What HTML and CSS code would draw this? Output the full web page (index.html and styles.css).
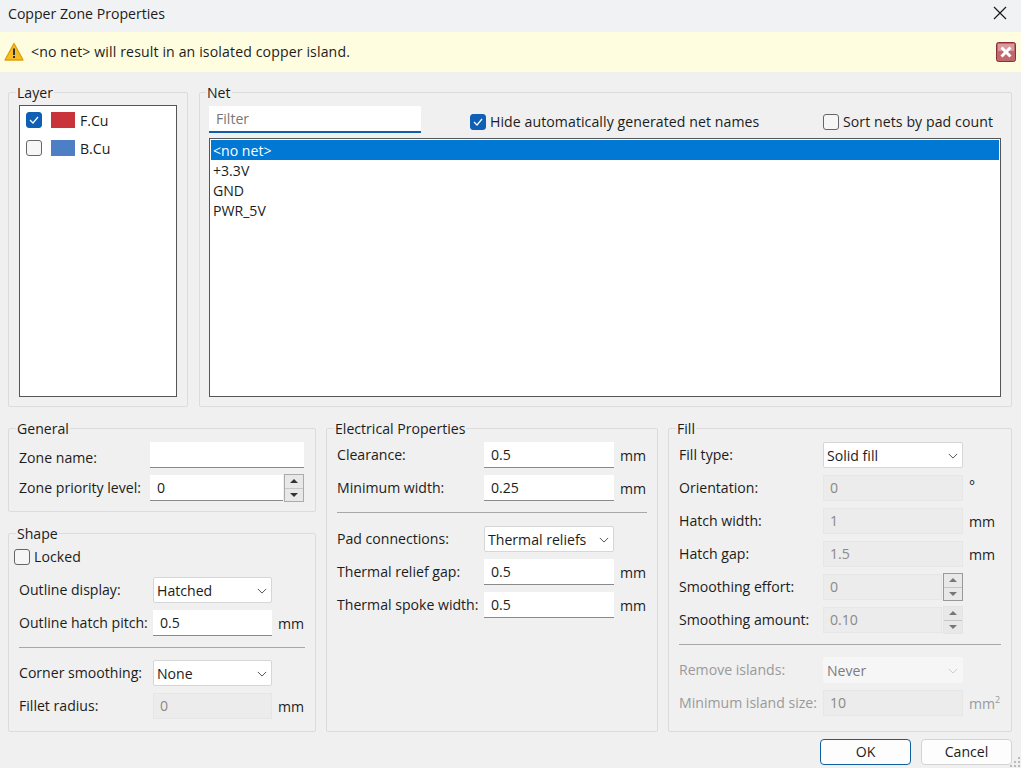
FILE: index.html
```html
<!DOCTYPE html>
<html lang="en">
<head>
<meta charset="utf-8">
<title>Copper Zone Properties</title>
<link rel="stylesheet" href="styles.css">
</head>
<body>
<div class="dialog">
  <header class="titlebar">
    <span>Copper Zone Properties</span>
    <svg class="close" width="14" height="14" viewBox="0 0 14 14"><path d="M1 1L13 13M13 1L1 13" stroke="#1a1a1a" stroke-width="1.2" fill="none"/></svg>
  </header>
  <div class="infobar">
    <svg class="warn" width="20" height="20" viewBox="0 0 20 20"><path d="M10 1.5L19 18H1Z" fill="#f7bd24" stroke="#e0a010" stroke-width="1.4" stroke-linejoin="round"/><rect x="9" y="6.5" width="2" height="6.5" fill="#333"/><rect x="9" y="14" width="2" height="2" fill="#333"/></svg>
    <span class="infotext">&lt;no net&gt; will result in an isolated copper island.</span>
    <svg class="infoclose" width="20" height="20" viewBox="0 0 20 20"><rect x="0.5" y="0.5" width="19" height="19" rx="2" fill="#c0686c" stroke="#8e2f35"/><rect x="2" y="2" width="16" height="7" fill="#d99a9c"/><path d="M5.5 5.5L14.5 14.5M14.5 5.5L5.5 14.5" stroke="#fff" stroke-width="3" fill="none"/></svg>
  </div>

  <main class="content">
    <section class="top">
      <fieldset class="group">
        <legend>Layer</legend>
        <div class="layerlist">
          <div class="layerrow">
            <span class="check on"><svg width="10" height="8" viewBox="0 0 10 8"><path d="M1 4L4 7L9 1" stroke="#fff" stroke-width="1.2" fill="none"/></svg></span>
            <span class="swatch red"></span><span class="layername">F.Cu</span>
          </div>
          <div class="layerrow">
            <span class="check"></span>
            <span class="swatch blue"></span><span class="layername">B.Cu</span>
          </div>
        </div>
      </fieldset>
      <fieldset class="group netgroup">
        <legend>Net</legend>
        <div class="netbar">
          <div class="filter">Filter</div>
          <label class="checkrow hide"><span class="check on"><svg width="10" height="8" viewBox="0 0 10 8"><path d="M1 4L4 7L9 1" stroke="#fff" stroke-width="1.2" fill="none"/></svg></span>Hide automatically generated net names</label>
          <label class="checkrow sort"><span class="check"></span>Sort nets by pad count</label>
        </div>
        <div class="netlist">
          <div class="netrow selected">&lt;no net&gt;</div>
          <div class="netrow">+3.3V</div>
          <div class="netrow">GND</div>
          <div class="netrow">PWR_5V</div>
        </div>
      </fieldset>
    </section>

    <section class="bottom">
      <div class="leftcol">
        <fieldset class="group">
          <legend>General</legend>
          <div class="form general">
            <span class="lower">Zone name:</span><div class="input"></div>
            <span>Zone priority level:</span>
            <div class="spinwrap"><div class="input grow">0</div><div class="spin"><i class="up"></i><i class="down"></i></div></div>
          </div>
        </fieldset>
        <fieldset class="group growbox">
          <legend>Shape</legend>
          <label class="checkrow locked"><span class="check"></span>Locked</label>
          <div class="form shape">
            <span>Outline display:</span><div class="select">Hatched<svg class="chev" width="10" height="6" viewBox="0 0 12 7"><path d="M1 1L6 6L11 1" stroke="#555" stroke-width="1.2" fill="none"/></svg></div><span></span>
            <span>Outline hatch pitch:</span><div class="input">0.5</div><span class="unit">mm</span>
            <hr class="sep">
            <span>Corner smoothing:</span><div class="select">None<svg class="chev" width="10" height="6" viewBox="0 0 12 7"><path d="M1 1L6 6L11 1" stroke="#555" stroke-width="1.2" fill="none"/></svg></div><span></span>
            <span>Fillet radius:</span><div class="input off">0</div><span class="unit">mm</span>
          </div>
        </fieldset>
      </div>

      <fieldset class="group">
        <legend>Electrical Properties</legend>
        <div class="form electrical">
          <span>Clearance:</span><div class="input">0.5</div><span class="unit">mm</span>
          <span>Minimum width:</span><div class="input">0.25</div><span class="unit">mm</span>
          <hr class="sep">
          <span>Pad connections:</span><div class="select">Thermal reliefs<svg class="chev" width="10" height="6" viewBox="0 0 12 7"><path d="M1 1L6 6L11 1" stroke="#555" stroke-width="1.2" fill="none"/></svg></div><span></span>
          <span>Thermal relief gap:</span><div class="input">0.5</div><span class="unit">mm</span>
          <span>Thermal spoke width:</span><div class="input">0.5</div><span class="unit">mm</span>
        </div>
      </fieldset>

      <fieldset class="group">
        <legend>Fill</legend>
        <div class="form fill">
          <span>Fill type:</span><div class="select">Solid fill<svg class="chev" width="10" height="6" viewBox="0 0 12 7"><path d="M1 1L6 6L11 1" stroke="#555" stroke-width="1.2" fill="none"/></svg></div><span></span>
          <span>Orientation:</span><div class="input off">0</div><span class="unit deg">°</span>
          <span>Hatch width:</span><div class="input off">1</div><span class="unit">mm</span>
          <span>Hatch gap:</span><div class="input off">1.5</div><span class="unit">mm</span>
          <span>Smoothing effort:</span><div class="spinwrap"><div class="input off grow">0</div><div class="spin dark"><i class="up"></i><i class="down"></i></div></div><span></span>
          <span>Smoothing amount:</span><div class="spinwrap"><div class="input off grow">0.10</div><div class="spin faint"><i class="up"></i><i class="down"></i></div></div><span></span>
          <hr class="sep">
          <span class="dim">Remove islands:</span><div class="select disabled">Never<svg class="chev" width="10" height="6" viewBox="0 0 12 7"><path d="M1 1L6 6L11 1" stroke="#ccc" stroke-width="1.2" fill="none"/></svg></div><span></span>
          <span class="dim">Minimum island size:</span><div class="input off">10</div><span class="unit dim">mm<sup>2</sup></span>
        </div>
      </fieldset>
    </section>

    <footer class="buttons">
      <button class="btn primary">OK</button>
      <button class="btn">Cancel</button>
    </footer>
  </main>
  <svg class="grip" width="11" height="11" viewBox="0 0 11 11" fill="#bbb"><rect x="8" y="0" width="2" height="2"/><rect x="4" y="4" width="2" height="2"/><rect x="8" y="4" width="2" height="2"/><rect x="0" y="8" width="2" height="2"/><rect x="4" y="8" width="2" height="2"/><rect x="8" y="8" width="2" height="2"/></svg>
</div>
</body>
</html>
```

FILE: styles.css
```css
* { box-sizing: border-box; }
html, body { margin: 0; padding: 0; }
body {
  width: 1021px;
  height: 768px;
  overflow: hidden;
  background: #f0f0f0;
  color: #1c1c1c;
  font-family: "Open Sans", "Noto Sans", sans-serif;
  font-size: 14.1px;
  line-height: 20px;
}
.dialog { position: relative; width: 1021px; height: 768px; }

.titlebar {
  height: 32px;
  padding: 4px 14px 0 8px;
  display: flex;
  justify-content: space-between;
  background: #f1f2f4;
}
.close { margin-top: 2px; }

.infobar {
  height: 40px;
  background: #fffde0;
  display: flex;
  align-items: center;
  padding: 0 5px 0 4px;
}
.warn { flex: none; }
.infotext { margin-left: 7px; flex: 1; letter-spacing: 0.13px; }
.infoclose { flex: none; }

.content { padding: 10px 9px 0 8px; }

.group {
  margin: 0;
  padding: 4px 10px 0;
  min-width: 0;
  border: 1px solid #dcdcdc;
  border-radius: 2px;
}
.group legend {
  margin-left: -3px;
  padding: 0 1px;
  height: 20px;
  line-height: 22px;
}

.top {
  display: grid;
  grid-template-columns: 180px 813px;
  column-gap: 11px;
  height: 325px;
}
.top .group { padding-top: 3px; }
.netgroup.group { padding-left: 9px; }
.netgroup legend { margin-left: -3px; }

.layerlist {
  height: 292px;
  background: #fff;
  border: 1px solid #555;
  padding: 6px;
  display: flex;
  flex-direction: column;
  gap: 12px;
}
.layerrow { display: flex; align-items: center; height: 16px; }
.swatch { width: 24px; height: 16px; margin-left: 9px; }
.swatch.red { background: #c8343a; }
.swatch.blue { background: #4d7fc4; }
.layername { margin-left: 5px; padding-top: 2px; }

.check {
  flex: none;
  width: 16px;
  height: 16px;
  border: 1px solid #666;
  border-radius: 3px;
  background: #f6f6f6;
  display: inline-flex;
  align-items: center;
  justify-content: center;
}
.check.on { background: #0f5fb4; border-color: #0f5fb4; }

.netbar { display: flex; height: 27px; margin: 1px 0 5px; }
.filter {
  width: 212px;
  background: #fff;
  border-bottom: 2px solid #0f5fa8;
  color: #777;
  padding: 3px 7px;
}
.checkrow { display: flex; align-items: center; gap: 4px; letter-spacing: 0.08px; }
.hide { margin-left: 49px; margin-top: 6px; height: 20px; }
.sort { margin-left: auto; margin-right: 8px; margin-top: 6px; height: 20px; }

.netlist {
  height: 259px;
  background: #fff;
  border: 1px solid #555;
  padding: 1px;
}
.netrow { height: 20px; padding: 1px 0 0 2px; }
.netrow.selected { background: #0078d4; color: #fff; }

.bottom {
  display: grid;
  grid-template-columns: 308px 332px 344px;
  column-gap: 10px;
  height: 314px;
  margin-top: 11px;
}
.leftcol { display: flex; flex-direction: column; gap: 11px; }
.growbox { flex: 1; }

.form {
  display: grid;
  row-gap: 7px;
  align-items: center;
  white-space: nowrap;
}
.general { grid-template-columns: 131px 154px; padding-bottom: 10px; }
.shape { grid-template-columns: 134px 119px auto; }
.electrical { grid-template-columns: 147px 130px auto; }
.fill { grid-template-columns: 144px 140px auto; }
.fill .sep, .shape .sep { margin-bottom: 5px; }
.lower { margin-top: 6px; }

.locked { margin: 0 0 10px -5px; height: 20px; }

.input {
  height: 26px;
  background: #fff;
  border-bottom: 1px solid #8a8a8a;
  padding: 3px 7px 0;
}
.input.off {
  background: #ececec;
  border: 1px solid #e6e6e6;
  color: #8a8a8a;
  padding: 2px 6px 0;
}
.select {
  height: 26px;
  background: #fff;
  border: 1px solid #d6d6d6;
  border-radius: 2px;
  padding: 2px 4px 0 3px;
  display: flex;
  justify-content: space-between;
  align-items: center;
}
.select.disabled { background: #f6f6f6; border-color: #f6f6f6; color: #7d7d7d; }
.unit { margin: 2px 0 0 6px; }
.deg { margin-top: -4px; }
.dim { color: #9a9a9a; }
.unit sup { font-size: 9px; line-height: 0; }

.sep {
  grid-column: 1 / -1;
  width: 100%;
  height: 1px;
  margin: 4px 0 6px;
  border: 0;
  background: #a8a8a8;
}

.spinwrap { display: flex; align-items: center; height: 26px; }
.grow { flex: 1; }
.spin {
  flex: none;
  width: 20px;
  height: 28px;
  margin: -1px 0 -1px 1px;
  border: 1px solid #ababab;
  background: #e8e8e8;
  display: flex;
  flex-direction: column;
}
.spin.faint { border-color: #e4e4e4; }
.spin.dark { border-color: #999; }
.spin i {
  flex: 1;
  display: flex;
  align-items: center;
  justify-content: center;
}
.spin i + i { border-top: 1px solid #c6c6c6; }
.spin i::before {
  content: "";
  width: 0;
  height: 0;
  border-left: 4px solid transparent;
  border-right: 4px solid transparent;
}
.spin .up::before { border-bottom: 4px solid #333; }
.spin .down::before { border-top: 4px solid #333; }
.spin.faint .up::before { border-bottom-color: #777; }
.spin.faint .down::before { border-top-color: #777; }
.spin.dark .up::before { border-bottom-color: #777; }
.spin.dark .down::before { border-top-color: #777; }

.buttons {
  display: flex;
  justify-content: flex-end;
  gap: 10px;
  margin-top: 7px;
}
.btn {
  width: 91px;
  height: 26px;
  font: inherit;
  color: inherit;
  background: #fdfdfd;
  border: 1px solid #d4d4d4;
  border-radius: 4px;
  padding: 0;
}
.btn.primary { border: 1px solid #0f5f9e; }

.grip { position: absolute; right: 0; bottom: 0; }
```
